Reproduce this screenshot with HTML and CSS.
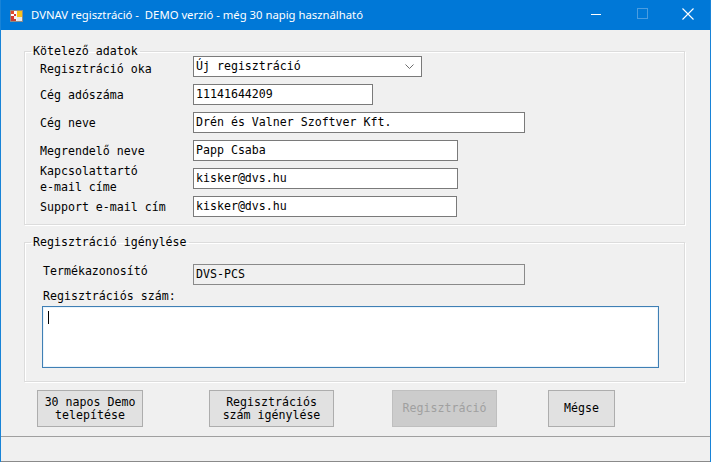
FILE: index.html
```html
<!DOCTYPE html>
<html lang="hu">
<head>
<meta charset="utf-8">
<title>DVNAV regisztráció</title>
<link rel="stylesheet" href="styles.css">
</head>
<body>
<div class="window">
  <div class="titlebar">
    <svg class="appicon" width="13" height="12" viewBox="0 0 13 12">
      <rect x="0.5" y="0.5" width="12" height="11" fill="#f4f4f4" stroke="#8a8a8a"/>
      <rect x="1" y="1" width="3" height="3" fill="#e04a2a"/>
      <rect x="4" y="1" width="2" height="3" fill="#ffffff"/>
      <rect x="1" y="4" width="3" height="2" fill="#ffffff"/>
      <rect x="4" y="4" width="2" height="2" fill="#d8362a"/>
      <rect x="1" y="6" width="3" height="3" fill="#d8362a"/>
      <rect x="4" y="6" width="2" height="3" fill="#f2f2f2"/>
      <rect x="1" y="9" width="5" height="2" fill="#c84030"/>
      <rect x="7" y="1" width="5" height="6" fill="#f7c21c"/>
      <rect x="7" y="7" width="5" height="4" fill="#e8e8e8"/>
    </svg>
    <span class="title">DVNAV regisztráció -&nbsp; DEMO verzió - még 30 napig használható</span>
    <div class="caption">
      <span class="cbtn"><svg width="46" height="30" viewBox="0 0 46 30"><path d="M18 14.5h10" stroke="#ffffff" stroke-width="1"/></svg></span>
      <span class="cbtn"><svg width="46" height="30" viewBox="0 0 46 30"><rect x="18.5" y="8.5" width="10" height="10" fill="none" stroke="#4b9de0" stroke-width="1"/></svg></span>
      <span class="cbtn"><svg width="46" height="30" viewBox="0 0 46 30"><path d="M17.5 8.5l11 11M28.5 8.5l-11 11" stroke="#ffffff" stroke-width="1.1"/></svg></span>
    </div>
  </div>

  <div class="client">
    <fieldset class="group g1">
      <legend>Kötelező adatok</legend>
      <div class="form-grid">
        <span class="lbl first">Regisztráció oka</span>
        <div class="field combo w229">Új regisztráció<svg class="chev" width="9" height="5" viewBox="0 0 9 5"><path d="M0.5 0.5l4 4 4-4" fill="none" stroke="#6d6d6d" stroke-width="1"/></svg></div>

        <span class="lbl">Cég adószáma</span>
        <div class="field w180">11141644209</div>

        <span class="lbl">Cég neve</span>
        <div class="field w332">Drén és Valner Szoftver Kft.</div>

        <span class="lbl">Megrendelő neve</span>
        <div class="field w265">Papp Csaba</div>

        <span class="lbl two">Kapcsolattartó<br>e-mail címe</span>
        <div class="field w265">kisker@dvs.hu</div>

        <span class="lbl">Support e-mail cím</span>
        <div class="field w264">kisker@dvs.hu</div>
      </div>
    </fieldset>

    <fieldset class="group g2">
      <legend>Regisztráció igénylése</legend>
      <div class="prod-row">
        <span class="lbl2">Termékazonosító</span>
        <div class="field readonly w332">DVS-PCS</div>
      </div>
      <div class="lbl2 regnum">Regisztrációs szám:</div>
      <div class="memo"><span class="caret"></span></div>
    </fieldset>

    <div class="buttons">
      <button class="btn b1">30 napos Demo<br>telepítése</button>
      <button class="btn b2">Regisztrációs<br>szám igénylése</button>
      <button class="btn b3 disabled" disabled>Regisztráció</button>
      <button class="btn b4">Mégse</button>
    </div>
  </div>

  <div class="statusbar"></div>
</div>
</body>
</html>
```

FILE: styles.css
```css
* { box-sizing: border-box; }

html, body {
  margin: 0;
  padding: 0;
  background: #f0f0f0;
}

body {
  font-family: "DejaVu Sans Mono", "Liberation Mono", monospace;
  font-size: 11.6px;
  color: #000;
}

.window {
  width: 711px;
  height: 462px;
  display: flex;
  flex-direction: column;
  background: #f0f0f0;
  border-left: 1px solid #1883d7;
  border-right: 1px solid #1883d7;
  overflow: hidden;
}

/* ---------- title bar ---------- */
.titlebar {
  height: 30px;
  flex: none;
  background: #0078d7;
  display: flex;
  align-items: center;
  margin: 0 -1px;
  color: #fff;
}

.appicon {
  margin-left: 10px;
  margin-top: 1px;
  flex: none;
}

.title {
  margin-left: 8px;
  margin-top: -1px;
  font-family: "Noto Sans", "Open Sans", sans-serif;
  font-size: 11.3px;
  white-space: nowrap;
  color: #ffffff;
  flex: 1;
}

.caption {
  display: flex;
  height: 30px;
}

.cbtn {
  width: 46px;
  height: 30px;
  display: block;
}
.cbtn svg { display: block; }

/* ---------- client ---------- */
.client {
  flex: 1;
  padding-top: 16px;
  display: flex;
  flex-direction: column;
}

.group {
  margin: 0 0 0 23px;
  width: 661px;
  padding: 0;
  border: 1px solid #dcdcdc;
  box-shadow: inset 1px 1px 0 #ffffff, 1px 1px 0 #ffffff;
  min-width: 0;
}

.group legend {
  margin-left: 6px;
  padding: 0 2px;
  line-height: 10px;
  height: 10px;
  white-space: nowrap;
}

.g1 {
  padding-bottom: 7px;
}

.form-grid {
  display: grid;
  grid-template-columns: 153px auto;
  grid-auto-rows: 21px;
  row-gap: 7px;
  align-items: center;
  justify-items: start;
  padding-left: 15px;
}

.lbl {
  white-space: nowrap;
  line-height: 16px;
  margin-top: 0px;
}
.lbl.first {
  margin-top: 4px;
}
.lbl.two {
  margin-top: 1px;
}

.field {
  height: 21px;
  line-height: 19px;
  background: #ffffff;
  border: 1px solid #7a7a7a;
  padding: 0 2px;
  white-space: nowrap;
  position: relative;
}

.combo {
  display: flex;
  align-items: center;
  justify-content: space-between;
  padding-right: 7px;
  border-color: #7a7a7a;
}
.chev { flex: none; }

.w229 { width: 229px; }
.w180 { width: 180px; }
.w332 { width: 332px; }
.w265 { width: 265px; }
.w264 { width: 264px; }

.readonly {
  background: #f0f0f0;
  border-color: #8a8a8a;
}

/* group 2 */
.g2 {
  margin-top: 12px;
  padding-bottom: 13px;
}

.prod-row {
  display: flex;
  align-items: flex-start;
  margin-top: 17px;
  padding-left: 18px;
}

.lbl2 {
  white-space: nowrap;
  line-height: 14px;
}

.prod-row .lbl2 {
  width: 150px;
  flex: none;
  padding-top: 0px;
}

.regnum {
  margin-top: 4px;
  padding-left: 18px;
}

.memo {
  margin-top: 3px;
  margin-left: 17px;
  width: 617px;
  height: 62px;
  background: #ffffff;
  border: 1px solid #3f7fb4;
  box-shadow: inset 0 0 0 1px #eaf4fc;
  padding: 4px 0 0 5px;
}

.caret {
  display: block;
  width: 1px;
  height: 13px;
  background: #000;
}

/* ---------- buttons ---------- */
.buttons {
  display: flex;
  margin-top: 8px;
  padding-left: 36px;
}

.btn {
  height: 37px;
  font-family: "DejaVu Sans Mono", "Liberation Mono", monospace;
  font-size: 11.6px;
  line-height: 13px;
  background: #e1e1e1;
  border: 1px solid #adadad;
  color: #000;
  padding: 0;
  margin: 0;
  text-align: center;
}

.b1 { width: 106px; }
.b2 { width: 125px; margin-left: 66px; }
.b3 { width: 105px; margin-left: 58px; }
.b4 { width: 67px; margin-left: 51px; }

.btn.disabled {
  background: #cccccc;
  border-color: #bfbfbf;
  color: #a0a0a0;
}

/* ---------- status bar ---------- */
.statusbar {
  flex: none;
  height: 26px;
  border-top: 1px solid #a0a0a0;
  border-bottom: 1px solid #8a8a8a;
  background: #f0f0f0;
}
```
